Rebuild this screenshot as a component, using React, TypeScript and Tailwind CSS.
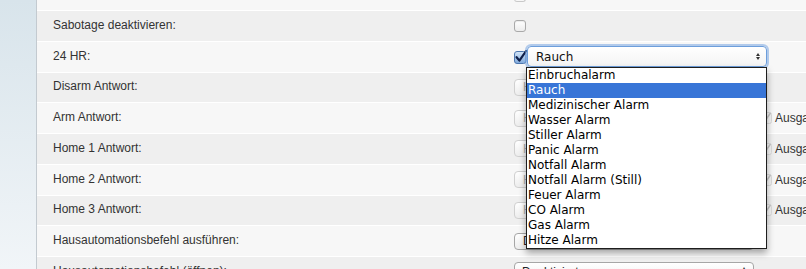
const rows = [
  { label: "Sabotage deaktivieren:", kind: "check" },
  { label: "24 HR:", kind: "active" },
  { label: "Disarm Antwort:", kind: "button" },
  { label: "Arm Antwort:", kind: "buttonOut" },
  { label: "Home 1 Antwort:", kind: "buttonOut" },
  { label: "Home 2 Antwort:", kind: "buttonOut" },
  { label: "Home 3 Antwort:", kind: "buttonOut" },
  { label: "Hausautomationsbefehl ausführen:", kind: "deact" },
  { label: "Hausautomationsbefehl (öffnen):", kind: "select" },
];

const options = [
  "Einbruchalarm",
  "Rauch",
  "Medizinischer Alarm",
  "Wasser Alarm",
  "Stiller Alarm",
  "Panic Alarm",
  "Notfall Alarm",
  "Notfall Alarm (Still)",
  "Feuer Alarm",
  "CO Alarm",
  "Gas Alarm",
  "Hitze Alarm",
];

const Checkbox = () => (
  <span className="block w-[12px] h-[12px] rounded-[3px] border border-[#a9a9a9] bg-gradient-to-b from-white to-[#ececec] shadow-[inset_0_1px_1px_rgba(0,0,0,0.08)]" />
);

const CheckedBox = () => (
  <svg width="13" height="14" viewBox="0 0 13 14" className="block">
    <defs>
      <linearGradient id="cb" x1="0" y1="0" x2="0" y2="1">
        <stop offset="0" stopColor="#d5e6f8" />
        <stop offset="1" stopColor="#7fa9dc" />
      </linearGradient>
    </defs>
    <rect x="0.5" y="1.5" width="11.5" height="12" rx="2.5" fill="url(#cb)" stroke="#4e78b0" />
    <path d="M2.6 7.2 L5.4 10.6 L12.2 0.8" fill="none" stroke="#10204a" strokeWidth="2.2" strokeLinecap="round" strokeLinejoin="round" />
  </svg>
);

const GhostButton = ({ text, dark }: { text: string; dark?: boolean }) => (
  <span
    className={`flex items-center h-[17px] w-[240px] rounded-[4px] border bg-gradient-to-b from-white to-[#ededed] pl-[8px] text-[12px] ${
      dark ? "border-[#a6a6a6] text-[#222]" : "border-[#d0d0d0] text-[#aaa]"
    }`}
  >
    {text}
  </span>
);

const Outlet = () => (
  <div className="flex items-center ml-[6px] gap-[3px]">
    <svg width="12" height="12" viewBox="0 0 12 12" className="block">
      <rect x="0.5" y="0.5" width="11" height="11" rx="2" fill="#f4f4f4" stroke="#dadada" />
      <path d="M3 6.5 L5 9 L10.5 1" fill="none" stroke="#c4c4c4" strokeWidth="1.4" />
    </svg>
    <span className="text-[12px] text-[#333]">Ausgang</span>
  </div>
);

const Value = ({ kind }: { kind: string }) => {
  if (kind === "check") return <Checkbox />;
  if (kind === "button") return <GhostButton text="Home" />;
  if (kind === "buttonOut")
    return (
      <div className="flex items-center">
        <GhostButton text="Home" />
        <Outlet />
      </div>
    );
  if (kind === "deact") return <GhostButton text="Deaktiviert" dark />;
  if (kind === "select")
    return (
      <span className="flex items-center justify-between h-[20px] w-[240px] rounded-[4px] border border-[#a6a6a6] bg-gradient-to-b from-white to-[#eeeeee] px-[7px] text-[12px] text-[#222] self-start mt-[5px]">
        Deaktiviert
        <span className="text-[8px] leading-[7px] text-[#333]">▴<br />▾</span>
      </span>
    );
  return (
    <div className="relative flex items-center">
      <CheckedBox />
      <div className="flex items-center justify-between h-[21px] w-[240px] rounded-[4px] border border-[#6d9edb] bg-gradient-to-b from-white to-[#f4f4f4] shadow-[0_0_0_2px_rgba(120,165,225,0.55)] pl-[8px] pr-[6px] text-[12px] text-[#111] font-['DejaVu_Sans',sans-serif]">
        Rauch
        <span className="flex flex-col items-center gap-[1px]">
          <span className="block w-0 h-0 border-x-[2.5px] border-x-transparent border-b-[3px] border-b-[#333]" />
          <span className="block w-0 h-0 border-x-[2.5px] border-x-transparent border-t-[3px] border-t-[#333]" />
        </span>
      </div>
      <ul className="absolute left-[12px] top-[21px] z-10 w-[241px] border border-[#1e1e1e] bg-white shadow-[0_4px_7px_rgba(0,0,0,0.35)] font-['DejaVu_Sans',sans-serif] text-[12px] text-black list-none">
        {options.map((o) => (
          <li
            key={o}
            className={`h-[15px] leading-[15px] pl-[1px] ${o === "Rauch" ? "bg-[#3875d7] text-white" : ""}`}
          >
            {o}
          </li>
        ))}
      </ul>
    </div>
  );
};

const App = () => (
  <div className="flex w-[806px] h-[269px] overflow-hidden font-['Liberation_Sans',Arial,sans-serif] text-[#333]">
    <aside className="w-[37px] shrink-0 border-r border-[#c3cad0] bg-gradient-to-b from-[#d8e4eb] to-[#f1f5f8]" />
    <main className="flex-1 flex flex-col">
      <div className="h-[10px] shrink-0 bg-[#f7f7f7] flex">
        <div className="w-[477px]" />
        <span className="block w-[12px] h-[3px] -mt-[1px] rounded-b-[3px] border border-t-0 border-[#c9c9c9]" />
      </div>
      {rows.map((r, i) => (
        <div
          key={r.label}
          className={`h-[30.75px] shrink-0 border-t border-white flex ${i % 2 === 0 ? "bg-[#efefef]" : "bg-[#f7f7f7]"}`}
        >
          <div className="w-[477px] shrink-0 pl-[16px] pb-[2px] flex items-center text-[12px] self-stretch">
            {r.label}
          </div>
          <div className={`flex ${r.kind === "select" ? "items-start" : "items-center"}`}>
            <Value kind={r.kind} />
          </div>
        </div>
      ))}
    </main>
  </div>
);

export default App;
